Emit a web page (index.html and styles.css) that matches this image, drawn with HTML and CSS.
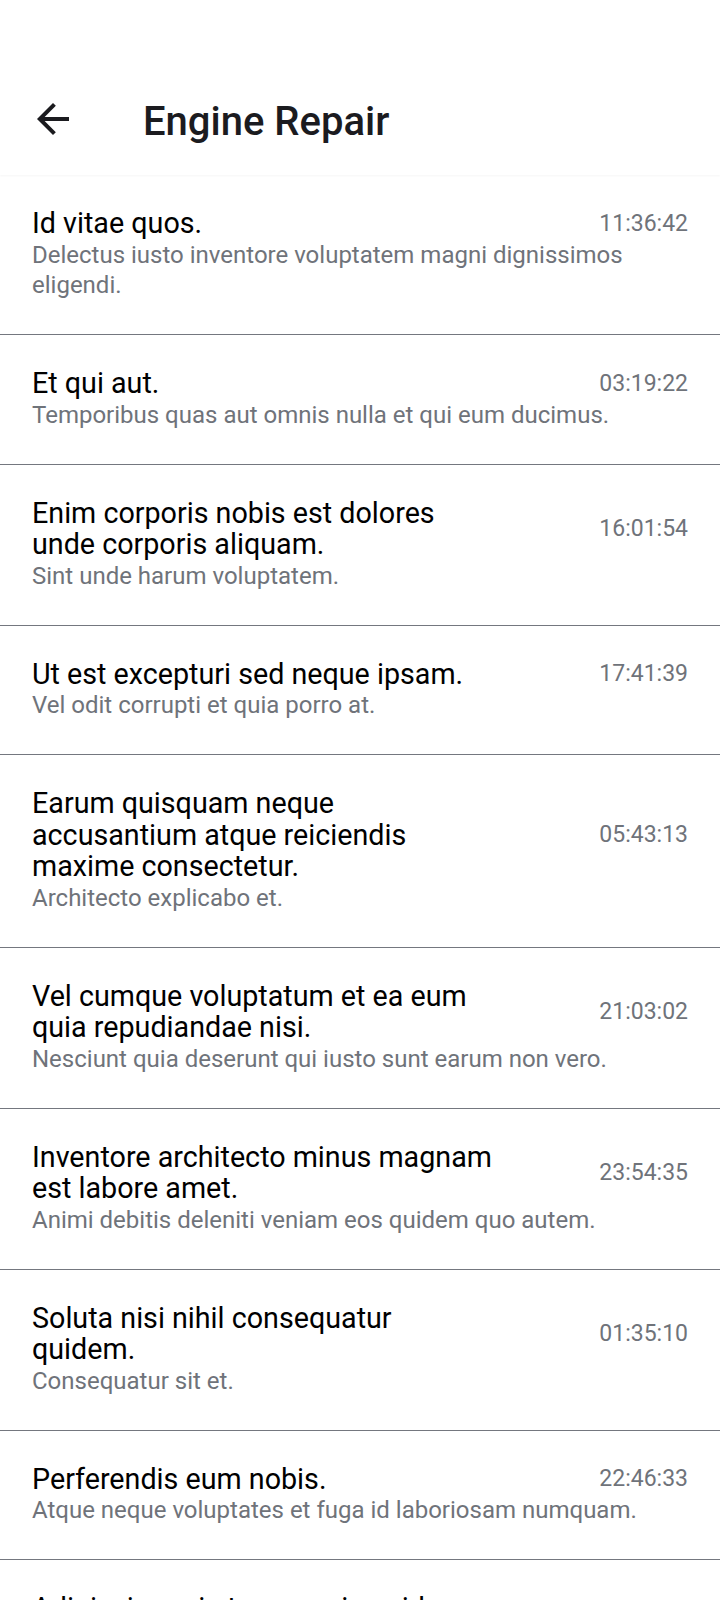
FILE: index.html
```html
<!DOCTYPE html>
<html lang="en">
<head>
<meta charset="utf-8">
<title>Engine Repair</title>
<link rel="stylesheet" href="styles.css">
</head>
<body>
<header class="appbar">
  <svg class="back" viewBox="0 0 24 24" width="48" height="48" aria-hidden="true">
    <path d="M20 11H7.83l5.59-5.59L12 4l-8 8 8 8 1.41-1.41L7.83 13H20v-2z" fill="#1b1b1f"/>
  </svg>
  <h1 class="title">Engine Repair</h1>
</header>
<main class="list">
  <div class="item">
    <div class="head"><div class="name">Id vitae quos.</div><div class="time">11:36:42</div></div>
    <div class="sub">Delectus iusto inventore voluptatem magni dignissimos eligendi.</div>
  </div>
  <div class="item">
    <div class="head"><div class="name">Et qui aut.</div><div class="time">03:19:22</div></div>
    <div class="sub">Temporibus quas aut omnis nulla et qui eum ducimus.</div>
  </div>
  <div class="item">
    <div class="head"><div class="name">Enim corporis nobis est dolores unde corporis aliquam.</div><div class="time">16:01:54</div></div>
    <div class="sub">Sint unde harum voluptatem.</div>
  </div>
  <div class="item">
    <div class="head"><div class="name">Ut est excepturi sed neque ipsam.</div><div class="time">17:41:39</div></div>
    <div class="sub">Vel odit corrupti et quia porro at.</div>
  </div>
  <div class="item">
    <div class="head"><div class="name">Earum quisquam neque accusantium atque reiciendis maxime consectetur.</div><div class="time">05:43:13</div></div>
    <div class="sub">Architecto explicabo et.</div>
  </div>
  <div class="item">
    <div class="head"><div class="name">Vel cumque voluptatum et ea eum quia repudiandae nisi.</div><div class="time">21:03:02</div></div>
    <div class="sub">Nesciunt quia deserunt qui iusto sunt earum non vero.</div>
  </div>
  <div class="item">
    <div class="head"><div class="name">Inventore architecto minus magnam est labore amet.</div><div class="time">23:54:35</div></div>
    <div class="sub">Animi debitis deleniti veniam eos quidem quo autem.</div>
  </div>
  <div class="item">
    <div class="head"><div class="name">Soluta nisi nihil consequatur quidem.</div><div class="time">01:35:10</div></div>
    <div class="sub">Consequatur sit et.</div>
  </div>
  <div class="item">
    <div class="head"><div class="name">Perferendis eum nobis.</div><div class="time">22:46:33</div></div>
    <div class="sub">Atque neque voluptates et fuga id laboriosam numquam.</div>
  </div>
  <div class="item">
    <div class="head"><div class="name">Adipisci omnis tempore ipsa id laborum.</div><div class="time">08:12:27</div></div>
    <div class="sub">Quia tempora dolorem et.</div>
  </div>
</main>
</body>
</html>
```
FILE: styles.css
```css
html, body {
  margin: 0;
  padding: 0;
  background: #ffffff;
}
body {
  font-family: Roboto, "Noto Sans", "Liberation Sans", sans-serif;
  width: 720px;
  height: 1600px;
  overflow: hidden;
}
.appbar {
  height: 175px;
  box-sizing: border-box;
  padding: 68px 0 0 29px;
  display: flex;
  align-items: center;
  background: #ffffff;
  box-shadow: 0 1px 2px rgba(0, 0, 0, 0.04);
  position: relative;
  z-index: 1;
}
.back {
  flex: none;
  display: block;
  margin-top: -6px;
}
.title {
  margin: 0 0 0 66px;
  font-size: 40px;
  line-height: 48px;
  font-weight: 500;
  color: #1b1b1f;
}
.list {
  display: flex;
  flex-direction: column;
}
.item {
  padding: 33px 32px 33.5px 32px;
  border-bottom: 1px solid #74777f;
  display: flex;
  flex-direction: column;
}
.head {
  display: flex;
  align-items: center;
}
.name {
  flex: 1;
  min-width: 0;
  font-size: 28.7px;
  line-height: 31.5px;
  color: #000000;
}
.time {
  flex: none;
  width: 192px;
  text-align: right;
  font-size: 23px;
  line-height: 28px;
  color: #6f737a;
}
.sub {
  font-size: 24px;
  line-height: 30.5px;
  color: #6f737a;
}
```
